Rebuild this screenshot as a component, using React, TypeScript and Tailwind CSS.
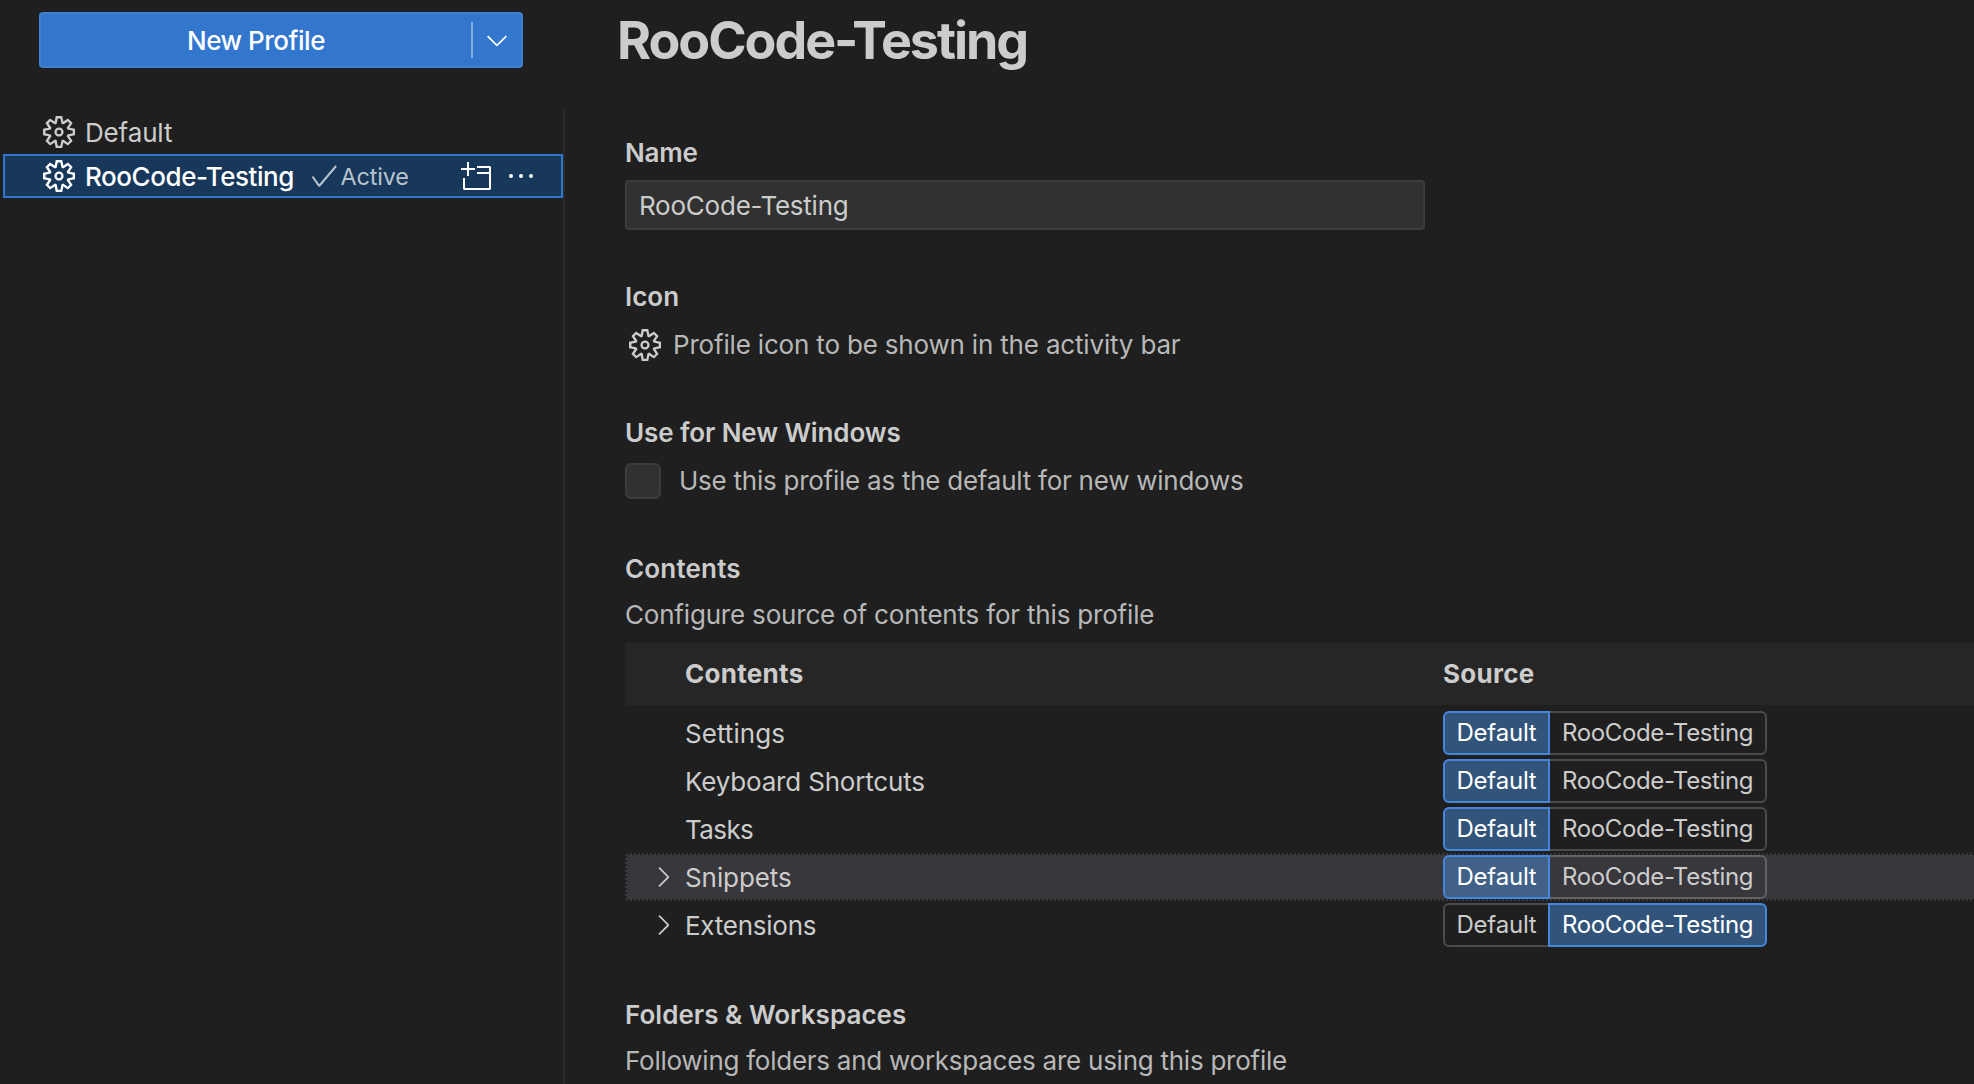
import type { ReactNode } from "react";
import clsx from "clsx";
import {
  VscCheck,
  VscChevronDown,
  VscChevronRight,
  VscEllipsis,
  VscEmptyWindow,
  VscSettingsGear,
} from "react-icons/vsc";

type Source = "default" | "profile";

interface ContentRow {
  label: string;
  tracking: string;
  source: Source;
  expandable?: boolean;
  hovered?: boolean;
}

const rows: ContentRow[] = [
  { label: "Settings", tracking: "tracking-[0.05px]", source: "default" },
  { label: "Keyboard Shortcuts", tracking: "tracking-[-0.18px]", source: "default" },
  { label: "Tasks", tracking: "tracking-[-0.6px]", source: "default" },
  { label: "Snippets", tracking: "tracking-[-0.08px]", source: "default", expandable: true, hovered: true },
  { label: "Extensions", tracking: "tracking-[-0.26px]", source: "profile", expandable: true },
];

function Heading({ children, className }: { children: ReactNode; className?: string }) {
  return <h2 className={clsx("font-semibold whitespace-nowrap text-[#cccccc]", className)}>{children}</h2>;
}

function SourceToggle({ source, hovered }: { source: Source; hovered?: boolean }) {
  const idle = hovered
    ? "border-[#626166] text-[#cccccc]"
    : "border-[#4b4b4b] text-[#cccccc]";
  const active = clsx("relative z-10 border-[#4586dd] text-white", hovered ? "bg-[#416189]" : "bg-[#33547a]");
  return (
    <div className="flex text-[24px] leading-[38px]">
      <button
        className={clsx(
          "h-11 w-[107px] rounded-l-md border-2 pl-[11.5px] text-left tracking-[-0.22px]",
          source === "default" ? active : idle,
        )}
      >
        Default
      </button>
      <button
        className={clsx(
          "-ml-0.5 h-11 w-[219px] rounded-r-md border-2 pl-3 text-left tracking-[-0.36px] whitespace-nowrap",
          source === "profile" ? active : idle,
        )}
      >
        RooCode-Testing
      </button>
    </div>
  );
}

function Sidebar() {
  return (
    <aside className="flex w-[565px] shrink-0 flex-col">
      <div className="mt-3 ml-[39px] flex h-14 w-[484px] items-center rounded-[4px] border-2 border-[#4280d0] bg-[#3376cd] text-white">
        <button className="flex-1 pt-0.5 text-center font-medium tracking-[-0.48px]">New Profile</button>
        <span className="h-9 w-0.5 bg-[#85ade1]" />
        <button className="flex w-12 justify-center" aria-label="More profile actions">
          <VscChevronDown className="size-8" />
        </button>
      </div>

      <ul className="mt-[42px] flex-1 border-r-2 border-[#2b2b2b]">
        <li className="flex h-11 items-center pl-[43px] text-[#cccccc]">
          <VscSettingsGear className="size-8" />
          <span className="mt-0.5 ml-2.5 tracking-[-0.15px]">Default</span>
        </li>
        <li className="ml-[3px] flex h-11 items-center border-2 border-[#3376cd] bg-[#17385b] pl-[38px] text-white">
          <VscSettingsGear className="size-8" />
          <span className="mt-0.5 ml-2.5 w-[223px] font-medium tracking-[-0.43px] whitespace-nowrap">
            RooCode-Testing
          </span>
          <VscCheck className="size-8 text-[#b9c3cd]" />
          <span className="mt-px ml-[0.5px] w-[120.5px] text-[23.4px] tracking-[-0.15px] text-[#b9c3cd]">Active</span>
          <VscEmptyWindow className="size-8" />
          <VscEllipsis className="ml-3 size-8" />
        </li>
      </ul>
    </aside>
  );
}

function ContentsTable() {
  return (
    <div className="mt-[11px]">
      <div className="flex h-[62px] items-center bg-[#262626] pl-[60px] font-bold text-[#cccccc]">
        <span className="w-[758px] tracking-[0.3px]">Contents</span>
        <span className="tracking-[0.28px]">Source</span>
      </div>
      <div className="pt-1">
        {rows.map((row) => (
          <div
            key={row.label}
            className={clsx(
              "-mr-1 flex h-12 items-center border-2 border-dotted pl-5 text-[#cccccc]",
              row.hovered ? "border-[#1f1f1f] bg-[#38373c]" : "border-transparent",
            )}
          >
            <span className="flex w-[38px] shrink-0">
              {row.expandable && <VscChevronRight className="size-8" />}
            </span>
            <span className={clsx("mt-0.5 w-[758px] shrink-0", row.tracking)}>{row.label}</span>
            <SourceToggle source={row.source} hovered={row.hovered} />
          </div>
        ))}
      </div>
    </div>
  );
}

export default function App() {
  return (
    <div className="flex h-[1084px] w-full overflow-hidden bg-[#1f1f1f] font-['Inter',sans-serif] text-[26px] leading-9">
      <Sidebar />
      <main className="min-w-0 flex-1 pt-2.5 pl-[60px]">
        <h1 className="-ml-2 text-[52px] leading-[61px] font-bold tracking-[-2.05px] text-[#cccccc]">
          RooCode-Testing
        </h1>

        <Heading className="mt-16 tracking-[-0.2px]">Name</Heading>
        <div className="mt-[9px] flex h-[50px] w-[800px] items-center rounded-[4px] border-2 border-[#3c3c3c] bg-[#313131] pt-0.5 pl-3 tracking-[-0.23px] text-[#cccccc]">
          RooCode-Testing
        </div>

        <Heading className="mt-12 leading-[37px]">Icon</Heading>
        <div className="mt-3 flex h-9 items-center pl-1">
          <VscSettingsGear className="size-8 text-[#cccccc]" />
          <span className="ml-3 tracking-[-0.18px] whitespace-nowrap text-[#b8b8b8]">
            Profile icon to be shown in the activity bar
          </span>
        </div>

        <Heading className="mt-[52px] tracking-[-0.1px]">Use for New Windows</Heading>
        <label className="mt-3 flex h-9 items-center">
          <span className="size-9 rounded-md border-2 border-[#3c3c3c] bg-[#313131]" />
          <span className="ml-[18px] tracking-[-0.25px] whitespace-nowrap text-[#b8b8b8]">
            Use this profile as the default for new windows
          </span>
        </label>

        <Heading className="mt-[51px] leading-[37px] tracking-[0.18px]">Contents</Heading>
        <p className="mt-2.5 leading-[35px] tracking-[-0.19px] text-[#b8b8b8]">
          Configure source of contents for this profile
        </p>
        <ContentsTable />

        <Heading className="mt-[47px] leading-[37px] tracking-[0.03px]">Folders &amp; Workspaces</Heading>
        <p className="mt-2.5 leading-[35px] tracking-[-0.256px] whitespace-nowrap text-[#b8b8b8]">
          Following folders and workspaces are using this profile
        </p>
      </main>
    </div>
  );
}
